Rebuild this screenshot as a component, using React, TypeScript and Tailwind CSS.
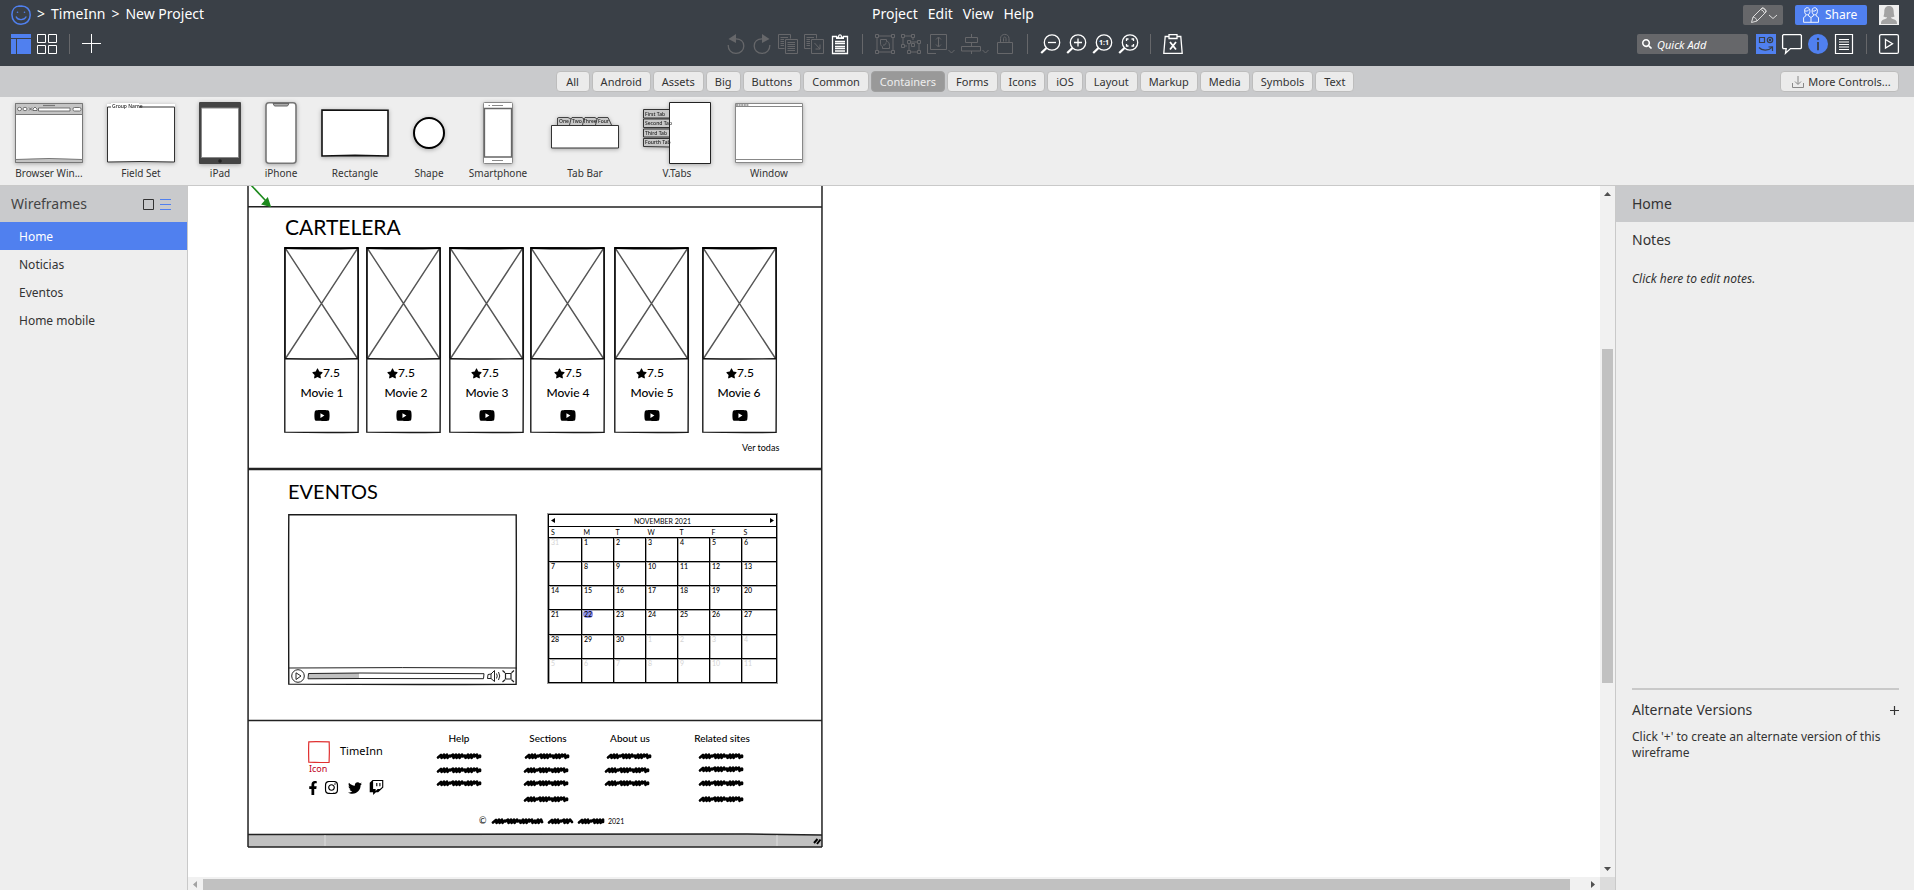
import React from "react";
import { FaFacebookF, FaInstagram, FaTwitter, FaTwitch, FaYoutube, FaStar, FaSearch } from "react-icons/fa";

type Kids = { children?: React.ReactNode };

/* ---------- shared pieces ---------- */

function Tool({ label, wide, muted, children }: Kids & { label: string; wide?: boolean; muted?: boolean }) {
  return (
    <button
      type="button"
      aria-label={label}
      className={
        (wide ? "w-7" : "w-5") + " h-5 shrink-0 " + (muted ? "text-[#66676a]" : "text-white")
      }
    >
      <svg
        viewBox={wide ? "0 0 28 20" : "0 0 20 20"}
        className="block h-5 w-full overflow-visible"
        fill="none"
        stroke="currentColor"
      >
        {children}
      </svg>
    </button>
  );
}

const Divider = () => <span className="mx-[6px] h-5 w-px shrink-0 bg-[#66676a]" />;

function Magnifier({ children }: Kids) {
  return (
    <>
      <circle cx="12" cy="8.5" r="7.7" strokeWidth="1.3" />
      <path d="M6.5 14L1.2 19" strokeWidth="2.2" />
      {children}
    </>
  );
}

/* ---------- header ---------- */

function Header() {
  return (
    <header className="bg-[#3a4047] pt-[5px] pr-[15px] pb-3 pl-[11px] text-white">
      <div className="grid h-5 grid-cols-[1fr_auto_1fr] items-center">
        <nav className="flex items-start gap-[6px] text-[14px] leading-[18px]" aria-label="Breadcrumb">
          <a href="#home" aria-label="Home">
            <svg viewBox="0 0 20 20" className="block size-5" fill="none" stroke="#5080ef">
              <path
                d="M8.5 1C4 1.200 1 4.500 .9 9.500C.9 15 4.500 19.200 10 19.200C15.500 19.100 19.200 15.500 19.200 10C19.200 4.500 15.500 .9 10.500 .9L7 1.300"
                strokeWidth="1.5"
              />
              <path d="M5 11.500C6.500 15.500 13 16 15.300 11.500" strokeWidth="1.300" />
              <circle cx="6.500" cy="7.300" r=".8" fill="#5080ef" stroke="none" />
              <circle cx="13.500" cy="7.300" r=".8" fill="#5080ef" stroke="none" />
            </svg>
          </a>
          <span>&gt;</span>
          <a href="#site">TimeInn</a>
          <span>&gt;</span>
          <a href="#project">New Project</a>
        </nav>
        <nav className="flex h-5 items-start gap-[10px] pr-1 text-[14px] leading-[18px]" aria-label="Menu">
          <button type="button">Project</button>
          <button type="button">Edit</button>
          <button type="button">View</button>
          <button type="button">Help</button>
        </nav>
        <div className="flex items-center justify-end gap-3">
          <button type="button" aria-label="Edit mode" className="h-5 w-10 rounded-[2px] bg-[#66676a]">
            <svg viewBox="0 0 40 20" className="block h-5 w-10" fill="none" stroke="#ddd">
              <path d="M8.500 17.500L10 12L19 3C20 2 24 5 23 7L14 16ZM10 12C12 12.200 13.800 14 14 16M17.500 4.500C19.500 5 21 6.500 21.500 8.500M19 3C21 3.500 22.500 5 23 7" />
              <path d="M26 10L30 13.500L34 10" />
            </svg>
          </button>
          <button
            type="button"
            className="flex h-5 w-[72px] items-center gap-[6px] rounded-[2px] bg-[#5080ef] pl-2 text-[12px] leading-5"
          >
            <svg viewBox="0 0 16 16" className="size-4" fill="none" stroke="#fff" strokeWidth=".9">
              <path d="M4.200 .7C2 .7 1.500 2.500 1.600 4.500C1.700 6.500 2.800 7.800 4.200 7.800C5.800 7.800 6.800 6.500 6.900 4.500C7 2.500 6.300 .7 4.200 .7ZM11.700 .7C9.500 .7 9 2.500 9.100 4.500C9.200 6.500 10.300 7.800 11.700 7.800C13.300 7.800 14.300 6.500 14.400 4.500C14.500 2.500 13.800 .7 11.700 .7Z" />
              <path d="M2.800 7.500V9L.6 10.500V15.300H15.500V10.500L13.200 9V7.500M5.600 7.500V9L8 10.500V15.300M8 10.500L10.300 9V7.500M1.800 4C4 4.500 5.500 3.500 6 2.500M9.300 4C11.500 4.500 13 3.500 13.500 2.500" />
            </svg>
            Share
          </button>
          <button type="button" aria-label="Account" className="size-5 bg-[#eee]">
            <svg viewBox="0 0 20 20" className="block size-5" fill="#a3a3a3">
              <path d="M10 1C6.500 1 5.300 3.500 5.300 6.500C5.300 9 4.800 10 4.500 11.500C6 12.300 7 12.300 8 12C8 14 6 14 4 14.800C2.500 15.500 2 17 2 19H18C18 17 17.500 15.500 16 14.800C14 14 12 14 12 12C13 12.300 14 12.300 15.500 11.500C15.200 10 14.700 9 14.700 6.500C14.700 3.500 13.500 1 10 1Z" />
            </svg>
          </button>
        </div>
      </div>

      <div className="mt-[9px] grid h-5 grid-cols-[1fr_auto_1fr] items-center">
        <div className="flex items-center gap-[6px]">
          <Tool label="Editor view">
            <path d="M0 0H20V4H0ZM0 5H5V20H0ZM6 5H20V20H6Z" fill="#5080ef" stroke="none" />
          </Tool>
          <Tool label="Grid view">
            <path d="M.5 .5H8.500V8.500H.5ZM11.500 .5H19.500V8.500H11.500ZM.5 11.500H8.500V19.500H.5ZM11.500 11.500H19.500V19.500H11.500Z" />
          </Tool>
          <Divider />
          <Tool label="Add">
            <path d="M9.500 0V19M0 9.500H19" />
          </Tool>
        </div>

        <div className="flex items-center gap-[6px] pr-[2px]">
          <Tool label="Undo" muted>
            <path d="M2.200 11C2 16 5.500 19.400 10 19.400C14.500 19.400 17.800 16 17.800 12C17.800 7.500 14.500 4.800 10 4.800" strokeWidth="1.300" />
            <path d="M2.500 5L10 0V9Z" fill="currentColor" stroke="none" />
          </Tool>
          <Tool label="Redo" muted>
            <path d="M17.800 11C18 16 14.500 19.400 10 19.400C5.500 19.400 2.200 16 2.200 12C2.200 7.500 5.500 4.800 10 4.800" strokeWidth="1.300" />
            <path d="M17.500 5L10 0V9Z" fill="currentColor" stroke="none" />
          </Tool>
          <Tool label="Duplicate" muted>
            <path d="M6.500 14.500H.5V.5H12.500V4.500M2.500 3.500H10M2.500 5.500H6M2.500 7.500H6M2.500 9.500H6M2.500 11.500H6M7.500 5.500H19.500V19.500H7.500ZM9.500 8.500H17M9.500 10.500H17M9.500 12.500H17M9.500 14.500H17M9.500 16.500H17" />
          </Tool>
          <Tool label="Copy" muted>
            <path d="M6.500 14.500H.5V.5H12.500V4.500M2.500 3.500H10M2.500 5.500H6M2.500 7.500H6M2.500 9.500H6M2.500 11.500H6M7.500 5.500H19.500V19.500H7.500ZM10.500 9L16 15M16 10.500V15H11.500" />
          </Tool>
          <Tool label="Paste">
            <path d="M7 2.500H2.500V19.500H17.500V2.500H13M5 7.500H15M5 9.500H15M5 12.500H15M5 14.500H15M5 17H15" strokeWidth="1.300" />
            <path d="M6 5V2.500H8C8 -.5 12 -.5 12 2.500H14V5Z" fill="currentColor" stroke="none" />
            <circle cx="10" cy="2.500" r=".9" fill="#3a4047" stroke="none" />
          </Tool>
          <Divider />
          <Tool label="Group" muted>
            <path d="M2 3.500V16.500M18 3.500V16.500M3.500 2H16.500M3.500 18H16.500M.5 .5H3.500V3.500H.5ZM16.500 .5H19.500V3.500H16.500ZM.5 16.500H3.500V19.500H.5ZM16.500 16.500H19.500V19.500H16.500ZM5.500 5.500H11.500V7.500C14 7.500 14.500 9 14.500 14.500H7.500V12.500C6 12 5.500 11 5.500 9ZM8 11C9.500 11.500 11 10.500 11 8.500" />
          </Tool>
          <Tool label="Ungroup" muted>
            <path d="M.5 .5H3.500V3.500H.5ZM10.500 .5H13.500V3.500H10.500ZM.5 10.500H3.500V13.500H.5ZM2 3.500V10.500M3.500 2H10.500M12 3.500V6M3.500 12H6M6.500 6.500H9.500V9.500H6.500ZM16.500 6.500H19.500V9.500H16.500ZM6.500 16.500H9.500V19.500H6.500ZM16.500 16.500H19.500V19.500H16.500ZM10.500 9.500H13.500V12.500H10.500ZM9.500 8H16.500M8 9.500V16.500M9.500 18H16.500M18 9.500V16.500" />
          </Tool>
          <Tool label="Order" wide muted>
            <path d="M3.500 .5H19.500V15.500H3.500ZM.5 10V19.500H9M11.500 3.500V12.500M9 5.500L11.500 3L14 5.500M9 10.500L11.500 13L14 10.500M21.500 16L24.500 19L27.500 16" />
          </Tool>
          <Tool label="Align" wide muted>
            <path d="M10.500 0V3.500M10.500 8.500V12M10.500 17V20M4.500 3.500H16.500V8.500H4.500ZM.5 12.500H19.500V17H.5ZM21.500 16L24.500 19L27.500 16" />
          </Tool>
          <Tool label="Lock" muted>
            <path d="M2.500 8.500H17.500V19.500H2.500ZM5.500 8.500V4.500C5.500 -1 14 -1 14 4.500V8.500M8.500 7.500V4.500C8.500 2.500 11 2.500 11 4.500V7.500" />
          </Tool>
          <Divider />
          <Tool label="Zoom out">
            <Magnifier>
              <path d="M8 8.500H16" strokeWidth="1.300" />
            </Magnifier>
          </Tool>
          <Tool label="Zoom in">
            <Magnifier>
              <path d="M8 8.500H16M12 4.500V12.500" strokeWidth="1.300" />
            </Magnifier>
          </Tool>
          <Tool label="Actual size">
            <Magnifier>
              <text
                x="12"
                y="11"
                textAnchor="middle"
                fill="currentColor"
                stroke="none"
                className="text-[7px] font-bold"
              >
                1:1
              </text>
            </Magnifier>
          </Tool>
          <Tool label="Zoom to fit">
            <Magnifier>
              <path d="M8.500 7V5H10.500M13.500 5H15.500V7M15.500 10V12H13.500M10.500 12H8.500V10" strokeWidth="1.300" />
            </Magnifier>
          </Tool>
          <Divider />
          <Tool label="Clear markup">
            <path d="M6 2.500H2.200L.8 19.300H19.200L17.800 2.500H14M6 .7H14V4.500H6Z" strokeWidth="1.300" />
            <path d="M7 8L13 15.500M13 8L7 15.500" strokeWidth="1.800" />
          </Tool>
        </div>

        <div className="flex items-center justify-end gap-[6px]">
          <label className="mr-[2px] flex h-5 w-[111px] items-center gap-[5px] rounded-[2px] bg-[#66676a] pl-[5px]">
            <FaSearch className="size-[10px] shrink-0" />
            <input
              type="text"
              aria-label="Quick Add"
              placeholder="Quick Add"
              className="h-5 w-full min-w-0 bg-transparent text-[11px] italic outline-none placeholder:text-white"
            />
          </label>
          <Tool label="UI library">
            <path d="M0 0H20V20H0Z" fill="#5080ef" stroke="none" />
            <g stroke="#3a4047" strokeWidth="1.200">
              <path d="M3.500 3.500H8.500V8.500H3.500ZM3 13.500C6 17 12.500 17 16 13.300M12.500 13L16.500 12.800V17" />
              <circle cx="14" cy="6" r="2.700" />
              <circle cx="14" cy="6" r=".7" />
            </g>
          </Tool>
          <Tool label="Comments">
            <path d="M1.500 .6H18.500L19.400 1.500V14L18.500 14.600H8.500L3.500 19.300L4.200 14.600H1.200L.6 13.500V1.500Z" strokeWidth="1.300" />
          </Tool>
          <Tool label="Info">
            <circle cx="10" cy="10" r="10" fill="#5080ef" stroke="none" />
            <path d="M10 8V16.200" stroke="#3a4047" strokeWidth="1.800" />
            <circle cx="10" cy="5" r="1.200" fill="#3a4047" stroke="none" />
          </Tool>
          <Tool label="Notes">
            <path d="M1.500 .5H18.500V19.500H1.500ZM5 5.500H15M5 8H15M5 10.500H15M5 13H15M5 15.500H15" strokeWidth="1.200" />
          </Tool>
          <Divider />
          <Tool label="Present">
            <rect x=".6" y=".6" width="18.800" height="18.800" rx="1.500" strokeWidth="1.300" />
            <path d="M6.500 5.500L13.500 9.800L6.500 14Z" strokeWidth="1.300" />
          </Tool>
        </div>
      </div>
    </header>
  );
}

/* ---------- category bar ---------- */

const categories = [
  "All", "Android", "Assets", "Big", "Buttons", "Common", "Containers", "Forms",
  "Icons", "iOS", "Layout", "Markup", "Media", "Symbols", "Text",
];

function CategoryBar() {
  return (
    <div className="grid grid-cols-[1fr_auto_1fr] items-center bg-[#c9cacc] py-[5px] pr-[15px] pl-[11px] text-[11px] leading-[19px] text-[#333]">
      <div className="col-start-2 flex gap-[2px]">
        {categories.map((c) => (
          <button
            type="button"
            key={c}
            className={
              "min-w-[34px] rounded border px-2 " +
              (c === "Containers"
                ? "border-[#a0a0a0] bg-[#999] text-[#eee]"
                : "border-[#bdbdbd] bg-[#ebebeb]")
            }
          >
            {c}
          </button>
        ))}
      </div>
      <button
        type="button"
        className="flex w-[119px] items-center justify-center gap-1 justify-self-end rounded border border-[#bdbdbd] bg-[#ebebeb] pl-1"
      >
        <svg viewBox="0 0 12 12" className="size-3" fill="none" stroke="#888">
          <path d="M.5 7V11.500H11.500V7M6 0V8M3 5.500L6 8.500L9 5.500" />
        </svg>
        More Controls...
      </button>
    </div>
  );
}

/* ---------- control strip ---------- */

const tinyFont = "fill-[#222] stroke-none text-[5px] font-medium";

const controls: { name: string; w: string; width: number; art: React.ReactNode }[] = [
  {
    name: "Browser Win...",
    w: "w-[68px]",
    width: 68,
    art: (
      <g stroke="#777">
        <path d="M.5 1.500H67.500V60.500H.5Z" fill="#fff" />
        <path d="M.5 1.500H67.500V12.500H.5ZM.5 57.500Q34 55.500 67.500 57.500V60.500H.5Z" fill="#c4c4c4" />
        <path d="M28 3.500H40" strokeWidth="1.200" />
        <g fill="#fff" stroke="#555" strokeWidth=".8">
          <ellipse cx="4.500" cy="7" rx="2" ry="1.700" />
          <ellipse cx="10" cy="7" rx="2" ry="1.700" />
          <path d="M14 5.500L17 8.500M17 5.500L14 8.500M18 8.500V7L20 5L22 7V8.500ZM23.500 6H55V9H23.500Z" />
          <rect x="58" y="5.500" width="8" height="3.500" rx="1.500" />
        </g>
      </g>
    ),
  },
  {
    name: "Field Set",
    w: "w-[68px]",
    width: 68,
    art: (
      <>
        <path d="M0 2H68V8H0Z" fill="#fff" />
        <path d="M.5 5H67.500V60L34 59.500L.5 60Z" fill="#fff" stroke="#333" />
        <path d="M4 1H32V7H4Z" fill="#fff" stroke="none" />
        <text x="5" y="6" className={tinyFont}>Group Name</text>
      </>
    ),
  },
  {
    name: "iPad",
    w: "w-[42px]",
    width: 42,
    art: (
      <>
        <rect x="0" y="0" width="42" height="62" rx="1" fill="#444" />
        <path d="M2.500 6H39.500V55.500H2.500Z" fill="#fff" stroke="#888" />
        <circle cx="21" cy="59" r="1.800" fill="#222" />
      </>
    ),
  },
  {
    name: "iPhone",
    w: "w-8",
    width: 32,
    art: (
      <>
        <rect x="1" y=".8" width="30" height="60.500" rx="3" fill="#fff" stroke="#777" strokeWidth="1.600" />
        <path d="M8 1.500H24L22.500 4H9.500Z" fill="#aaa" stroke="#666" />
      </>
    ),
  },
  {
    name: "Rectangle",
    w: "w-[68px]",
    width: 68,
    art: <path d="M1 8L67 8.300L67 54L34 53.400L1 54Z" fill="#fff" stroke="#111" strokeWidth="1.600" />,
  },
  {
    name: "Shape",
    w: "w-8",
    width: 32,
    art: <circle cx="16" cy="31" r="15" fill="#fff" stroke="#000" strokeWidth="2" />,
  },
  {
    name: "Smartphone",
    w: "w-[58px]",
    width: 58,
    art: (
      <>
        <rect x="14.500" y=".5" width="29" height="61" rx="1" fill="#fff" stroke="#888" />
        <path d="M15.500 6.500H42.500V55H15.500Z" fill="#fff" stroke="#666" strokeWidth="1.300" />
        <path d="M23 3.500H34M19.500 3.500H21M23 58.500H34" stroke="#888" />
      </>
    ),
  },
  {
    name: "Tab Bar",
    w: "w-[68px]",
    width: 68,
    art: (
      <>
        <path d="M6.500 23V16L8 15.500H17L20 17L21 15.500H31L33 17L34 15.500H44L46 17L47 15.500H57L60.500 23M20 17L18.500 23M33 17L31.500 23M46 17L44.500 23" fill="#c8c8c8" stroke="#333" strokeWidth=".9" />
        <path d="M.5 23.500H67.500V46H.5Z" fill="#fff" stroke="#333" />
        <text x="8" y="21" className={tinyFont}>One</text>
        <text x="21" y="21" className={tinyFont}>Two</text>
        <text x="32" y="21" className={tinyFont}>Three</text>
        <text x="47" y="21" className={tinyFont}>Four</text>
      </>
    ),
  },
  {
    name: "V.Tabs",
    w: "w-[68px]",
    width: 68,
    art: (
      <>
        <path d="M.5 7.500H27V16H.5ZM.5 17H27V25.500H.5ZM.5 27H27V35H.5ZM.5 36.500H27V45L.5 44.500Z" fill="#c8c8c8" stroke="#333" />
        <path d="M26.500 .5H67.500V61.500H26.500Z" fill="#fff" stroke="#222" />
        <text x="2" y="13.500" className={tinyFont}>First Tab</text>
        <text x="2" y="23" className={tinyFont}>Second Tab</text>
        <text x="2" y="32.500" className={tinyFont}>Third Tab</text>
        <text x="2" y="42" className={tinyFont}>Fourth Tab</text>
      </>
    ),
  },
  {
    name: "Window",
    w: "w-[68px]",
    width: 68,
    art: (
      <g stroke="#888">
        <path d="M.5 1.500H67.500V60.500H.5Z" fill="#fff" />
        <path d="M.5 4.500H67.500M.5 57.500H67.500" />
        <path d="M1 3H14" strokeWidth="1.500" strokeDasharray="2 .6" />
      </g>
    ),
  },
];

function ControlStrip() {
  return (
    <div className="flex gap-6 border-b border-[#c9c9c9] bg-[#eee] pt-[5px] pb-[5px] pl-[15px]">
      {controls.map((c) => (
        <button type="button" key={c.name} className={c.w + " flex shrink-0 flex-col items-center text-[#333]"}>
          <svg viewBox={`0 0 ${c.width} 62`} className="block h-[62px] w-full overflow-visible drop-shadow-[0_1px_2px_rgba(0,0,0,0.3)]" fill="none">
            {c.art}
          </svg>
          <span className="mt-[2px] text-[10px] leading-[14px] whitespace-nowrap">{c.name}</span>
        </button>
      ))}
    </div>
  );
}

/* ---------- side panels ---------- */

function Navigator() {
  const pages = ["Home", "Noticias", "Eventos", "Home mobile"];
  return (
    <aside className="w-[188px] shrink-0 border-r border-[#c9c9c9] bg-[#eee]">
      <div className="flex h-9 items-center justify-between bg-[#c9cacc] pr-4 pl-[11px]">
        <h2 className="text-[14px] leading-[18px] text-[#444]">Wireframes</h2>
        <div className="flex gap-[6px]">
          <button type="button" aria-label="Thumbnails">
            <svg viewBox="0 0 11 11" className="block size-[11px]" fill="none" stroke="#333">
              <path d="M.5 .5H10.500V10.500H.5Z" />
            </svg>
          </button>
          <button type="button" aria-label="List">
            <svg viewBox="0 0 11 11" className="block size-[11px]" stroke="#5080ef">
              <path d="M0 .5H11M0 5.500H11M0 10.500H11" />
            </svg>
          </button>
        </div>
      </div>
      <ul className="text-[12px] leading-[26px] text-[#333]">
        {pages.map((p, i) => (
          <li key={p}>
            <a href={"#page-" + i} className={"block pt-[2px] pl-[19px] " + (i === 0 ? "bg-[#5080ef] text-white" : "")}>
              {p}
            </a>
          </li>
        ))}
      </ul>
    </aside>
  );
}

function Inspector() {
  return (
    <aside className="flex w-[299px] shrink-0 flex-col border-l border-[#c9c9c9] bg-[#eee] text-[#333]">
      <h2 className="h-9 bg-[#c9cacc] pl-4 text-[14px] leading-9">Home</h2>
      <div className="flex flex-1 flex-col pr-[15px] pl-4">
        <h3 className="text-[14px] leading-9">Notes</h3>
        <p className="mt-[13px] text-[12px] leading-4 italic">Click here to edit notes.</p>
        <section className="mt-auto h-[202px] border-t-2 border-[#c9c9c9]">
          <div className="flex items-center justify-between pt-[10px] text-[14px] leading-5">
            <h3>Alternate Versions</h3>
            <button type="button" aria-label="Add alternate version">
              <svg viewBox="0 0 9 9" className="block size-[9px]" stroke="#333">
                <path d="M4.500 0V9M0 4.500H9" strokeWidth="1.200" />
              </svg>
            </button>
          </div>
          <p className="mt-[9px] text-[12px] leading-4">Click '+' to create an alternate version of this wireframe</p>
        </section>
      </div>
    </aside>
  );
}

/* ---------- wireframe on the free canvas ---------- */

function Node({ x, y, w, h, className, children }: Kids & { x: number; y: number; w?: number; h?: number; className?: string }) {
  return (
    <div className={"absolute whitespace-nowrap " + (className ?? "")} style={{ left: x, top: y, width: w, height: h }}>
      {children}
    </div>
  );
}

function Centered({ x, y, className, children }: Kids & { x: number; y: number; className?: string }) {
  return (
    <Node x={x - 50} y={y - 8} w={100} h={16} className={"flex items-center justify-center " + (className ?? "")}>
      {children}
    </Node>
  );
}

function SketchRect({ w, h, stroke = 1.4, color = "#1a1a1a" }: { w: number; h: number; stroke?: number; color?: string }) {
  return (
    <svg viewBox={`0 0 ${w} ${h}`} className="absolute inset-0 size-full overflow-visible" fill="none" stroke={color} strokeWidth={stroke}>
      <path
        d={`M.8 .8Q${w / 3} .4 ${w - 0.8} .9Q${w - 0.4} ${h / 2} ${w - 0.9} ${h - 0.7}Q${w / 2} ${h - 0.2} .8 ${h - 0.9}Q.4 ${h / 3} .8 .8Z`}
      />
    </svg>
  );
}

const movies = [
  { x: 37, star: 79, name: 75 },
  { x: 119, star: 154, name: 159 },
  { x: 202, star: 238, name: 240 },
  { x: 283, star: 321, name: 321 },
  { x: 367, star: 403, name: 405 },
  { x: 455, star: 493, name: 492 },
];

function MovieCard({ x, star, name, n }: { x: number; star: number; name: number; n: number }) {
  return (
    <>
      <Node x={x} y={61} w={75} h={186}>
        <SketchRect w={75} h={186} />
        <svg viewBox="0 0 75 113" className="absolute top-0 left-0 h-[113px] w-full overflow-visible" fill="none">
          <path d="M1.500 1.500L73.500 111.500M73.500 1.500L1.500 111.500" stroke="#555" strokeWidth="1.400" />
          <path d="M.8 111.700Q40 112.200 74.200 111.700M74 1V111M1 1V111" stroke="#111" strokeWidth="1.400" />
          <path d="M.5 1Q40 2 74.500 1" stroke="#000" strokeWidth="2" />
        </svg>
      </Node>
      <Centered x={star} y={187} className="text-[12px] font-medium">
        <FaStar className="size-[11px]" />
        <span>7.5</span>
      </Centered>
      <Centered x={name} y={207} className="text-[12px] font-medium">
        Movie {n}
      </Centered>
      <Centered x={x + 38} y={229}>
        <FaYoutube className="h-[15px] w-4" preserveAspectRatio="none" />
      </Centered>
    </>
  );
}

function Video() {
  return (
    <Node x={41} y={328} w={229} h={171}>
      <SketchRect w={229} h={171} />
      <svg viewBox="0 0 229 18" className="absolute bottom-0 left-0 h-[18px] w-full" fill="none" stroke="#222">
        <path d="M0 1Q114 .2 229 1" />
        <circle cx="10" cy="9" r="6.300" />
        <path d="M8 5.800L13 9L8 12.500Z" />
        <path d="M21 6H71V12H21Z" fill="#c0c0c0" stroke="none" />
        <path d="M20.500 6.500L72 6L196 6.700L195.500 11.700L72 11.500L20 11.800Z" />
        <path d="M200 7.500L203 7L206.500 3.500V14.500L203 11.500L199.500 11.500ZM203 7V11.500M208.500 6.500Q210 9 208.500 11.500M210.500 5Q213 9 210.500 13" />
        <path d="M217.500 6.500H223V12H217.500ZM214.500 3.500L217 5.800M226 3.500L223.500 5.800M214.500 15L217 12.700M226 15L223.500 12.700" strokeWidth="1.200" />
      </svg>
    </Node>
  );
}

const calendarDays = Array.from({ length: 42 }, (_, i) => (i === 0 ? 31 : i <= 30 ? i : i - 30));

function Calendar() {
  const weeks = [0, 1, 2, 3, 4, 5];
  return (
    <Node x={301} y={328} w={229} h={169}>
      <table className="h-full w-full table-fixed border-collapse border border-black text-left align-top text-[7px] leading-[8px] outline outline-black/40">
        <colgroup>
          <col className="w-[33px]" />
          <col className="w-8" />
          <col className="w-8" />
          <col className="w-8" />
          <col className="w-8" />
          <col className="w-8" />
          <col />
        </colgroup>
        <thead>
          <tr className="h-3 border-b border-black">
            <th colSpan={7} className="p-0 font-normal">
              <div className="flex items-center justify-between px-[2px]">
                <button type="button" aria-label="Previous month">
                  <svg viewBox="0 0 4 5" className="block h-[5px] w-1"><path d="M4 0V5L0 2.500Z" /></svg>
                </button>
                <span>NOVEMBER 2021</span>
                <button type="button" aria-label="Next month">
                  <svg viewBox="0 0 4 5" className="block h-[5px] w-1"><path d="M0 0V5L4 2.500Z" /></svg>
                </button>
              </div>
            </th>
          </tr>
          <tr className="h-[11px]">
            {["S", "M", "T", "W", "T", "F", "S"].map((d, i) => (
              <th key={i} className="p-0 pl-[2px] font-normal">{d}</th>
            ))}
          </tr>
        </thead>
        <tbody>
          {weeks.map((w) => (
            <tr key={w} className="h-6">
              {calendarDays.slice(w * 7, w * 7 + 7).map((d, i) => {
                const index = w * 7 + i;
                const outside = index === 0 || index > 30;
                return (
                  <td
                    key={i}
                    className={
                      "border border-black p-0 pl-[2px] align-top shadow-[inset_1px_1px_0_rgba(0,0,0,0.35)] " +
                      (outside ? "text-[#d4d4d4]" : "font-medium")
                    }
                  >
                    {index === 22 ? <span className="-ml-px rounded-full bg-[#8f93ea] px-px">22</span> : d}
                  </td>
                );
              })}
            </tr>
          ))}
        </tbody>
      </table>
    </Node>
  );
}

function Scribble({ x, y, w = 45 }: { x: number; y: number; w?: number }) {
  const steps = Math.floor((w - 6) / 3);
  let d = "M1 5.500L4 3";
  for (let i = 0; i < steps; i++) {
    const px = 4 + i * 3;
    const dip = i % 4 === 3 ? 4.4 : 5.8;
    d += `L${px + 0.5} ${dip}L${px + 3} ${i % 5 === 2 ? 3.6 : 2.6}`;
  }
  d += `L${w - 2} 5`;
  return (
    <Node x={x} y={y} w={w} h={8}>
      <svg viewBox={`0 0 ${w} 8`} className="block size-full overflow-visible" fill="none" stroke="#000" strokeWidth="2.700" strokeLinejoin="round" strokeLinecap="round">
        <path d={d} />
      </svg>
    </Node>
  );
}

const footerColumns = [
  { title: "Help", x: 212, links: [[190, 566], [190, 580], [190, 593]] },
  { title: "Sections", x: 301, links: [[278, 566], [277, 580], [277, 593], [277, 609]] },
  { title: "About us", x: 383, links: [[360, 566], [358, 580], [358, 593]] },
  { title: "Related sites", x: 475, links: [[452, 566], [452, 579], [452, 593], [452, 609]] },
];

function Wireframe() {
  return (
    <Node x={59} y={0} w={576} h={662} className="font-['Lato',sans-serif] text-black">
      <svg viewBox="0 0 576 662" className="absolute inset-0 size-full" fill="none" stroke="#222" strokeWidth="1.500">
        <path d="M1 648.500Q200 646.500 500 648L575 649V661Q300 660.500 1 661Z" fill="#c1c1c1" stroke="none" />
        <path d="M1 0L1.200 300L1 661M575 0L574.700 300L575 661" />
        <path d="M1 20.800Q300 20.200 575 21M1 534.600Q300 534 575 534.600M1 648.500Q200 647.500 500 648L575 649M1 661Q300 660.500 575 661" />
        <path d="M1 283H575" strokeWidth="2.600" />
        <path d="M78 649V660M530 649V660" stroke="#ddd" strokeWidth="1" />
        <path d="M567 657L570.500 653M570 658L573.500 653.500" stroke="#000" strokeWidth="2" />
        <path d="M3 -2L19 15" stroke="#1d8a1d" strokeWidth="1.600" />
        <path d="M23 20L15.500 18L20.500 12.500Z" fill="#1d8a1d" stroke="#1d8a1d" />
      </svg>

      <Node x={38} y={29} className="text-[21px] leading-6">CARTELERA</Node>
      {movies.map((m, i) => (
        <MovieCard key={i} {...m} n={i + 1} />
      ))}
      <Node x={495} y={254} className="text-[9px] leading-4">Ver todas</Node>

      <Node x={41} y={293} className="text-[20px] leading-6">EVENTOS</Node>
      <Video />
      <Calendar />

      <Node x={61} y={555} w={22} h={22}>
        <SketchRect w={22} h={22} color="#e03030" stroke={1.2} />
      </Node>
      <Node x={62} y={575} className="font-['Noto_Sans',sans-serif] text-[9px] leading-4 text-[#c00020]">Icon</Node>
      <Node x={93} y={557} className="font-['Noto_Sans',sans-serif] text-[11px] leading-4">TimeInn</Node>
      <Node x={59} y={594} className="flex items-center">
        <FaFacebookF className="size-[14px]" />
        <FaInstagram className="ml-1 size-[15px]" />
        <FaTwitter className="ml-[9px] size-[14px]" />
        <FaTwitch className="ml-[7px] size-[15px]" />
      </Node>

      {footerColumns.map((c) => (
        <React.Fragment key={c.title}>
          <Centered x={c.x} y={552} className="text-[10px] font-medium">{c.title}</Centered>
          {c.links.map(([x, y]) => (
            <Scribble key={y} x={x} y={y} />
          ))}
        </React.Fragment>
      ))}

      <Node x={232} y={627} className="text-[9px] leading-4">©</Node>
      <Scribble x={245} y={631} w={52} />
      <Scribble x={301} y={631} w={26} />
      <Scribble x={331} y={631} w={27} />
      <Node x={361} y={627} className="text-[7px] leading-4">2021</Node>
    </Node>
  );
}

function Canvas() {
  return (
    <main className="grid min-w-0 flex-1 grid-cols-[1fr_15px] grid-rows-[1fr_13px] bg-white">
      <div className="relative overflow-hidden">
        <Wireframe />
      </div>
      <div className="flex flex-col items-center justify-between bg-[#f1f1f1] py-[6px]">
        <svg viewBox="0 0 7 4" className="h-1 w-[7px]" fill="#505050"><path d="M0 4L3.500 0L7 4Z" /></svg>
        <div className="flex w-[11px] flex-1 flex-col pt-[153px] pb-[184px]">
          <div className="flex-1 bg-[#c1c1c1]" />
        </div>
        <svg viewBox="0 0 7 4" className="h-1 w-[7px]" fill="#505050"><path d="M0 0L3.500 4L7 0Z" /></svg>
      </div>
      <div className="flex items-center justify-between bg-[#f1f1f1] pt-[2px] pr-[5px] pl-[5px]">
        <svg viewBox="0 0 4 7" className="h-[7px] w-1" fill="#a3a3a3"><path d="M4 0L0 3.500L4 7Z" /></svg>
        <div className="mr-[21px] ml-[6px] h-[11px] flex-1 bg-[#c1c1c1]" />
        <svg viewBox="0 0 4 7" className="h-[7px] w-1" fill="#505050"><path d="M0 0L4 3.500L0 7Z" /></svg>
      </div>
      <div className="bg-[#dcdcdc]" />
    </main>
  );
}

export default function App() {
  return (
    <div className="flex min-h-screen flex-col bg-[#eee] font-['Noto_Sans',sans-serif]">
      <Header />
      <CategoryBar />
      <ControlStrip />
      <div className="flex flex-1">
        <Navigator />
        <Canvas />
        <Inspector />
      </div>
    </div>
  );
}
